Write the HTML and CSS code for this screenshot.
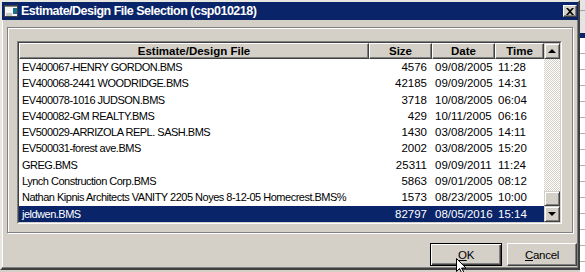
FILE: index.html
```html
<!DOCTYPE html>
<html lang="en">

<head>
    <meta charset="UTF-8">
    <title>Estimate/Design File Selection</title>
    <link rel="stylesheet" href="styles.css">
</head>

<body>
    <div class="dialog">
        <div class="titlebar">
            <svg class="app-icon" width="16" height="16" viewBox="0 0 16 16">
                <rect x="1.5" y="2.5" width="13" height="11" fill="#f4f4f4" stroke="#404040"/>
                <rect x="2" y="3" width="12" height="1" fill="#808080"/>
                <rect x="10" y="5" width="4" height="6" fill="#1c6e8c"/>
                <rect x="3" y="10" width="6" height="3" fill="#c8c8c8"/>
            </svg>
            <span class="title">Estimate/Design File Selection (csp010218)</span>
            <span class="close-btn">
                <svg width="8" height="7" viewBox="0 0 8 7">
                    <path d="M0 0h2l2 2 2-2h2L5 3.5 8 7H6L4 5 2 7H0l3-3.5z" fill="#000"/>
                </svg>
            </span>
        </div>

        <div class="frame">
            <div class="list">
                <div class="list-body">
                    <div class="table">
                        <div class="row header">
                            <div class="head-cell">Estimate/Design File</div>
                            <div class="head-cell">Size</div>
                            <div class="head-cell">Date</div>
                            <div class="head-cell">Time</div>
                        </div>
                        <div class="row">
                            <div class="cell name">EV400067-HENRY GORDON.BMS</div>
                            <div class="cell size">4576</div>
                            <div class="cell date">09/08/2005</div>
                            <div class="cell time">11:28</div>
                        </div>
                        <div class="row">
                            <div class="cell name">EV400068-2441 WOODRIDGE.BMS</div>
                            <div class="cell size">42185</div>
                            <div class="cell date">09/09/2005</div>
                            <div class="cell time">14:31</div>
                        </div>
                        <div class="row">
                            <div class="cell name">EV400078-1016 JUDSON.BMS</div>
                            <div class="cell size">3718</div>
                            <div class="cell date">10/08/2005</div>
                            <div class="cell time">06:04</div>
                        </div>
                        <div class="row">
                            <div class="cell name">EV400082-GM REALTY.BMS</div>
                            <div class="cell size">429</div>
                            <div class="cell date">10/11/2005</div>
                            <div class="cell time">06:16</div>
                        </div>
                        <div class="row">
                            <div class="cell name">EV500029-ARRIZOLA REPL. SASH.BMS</div>
                            <div class="cell size">1430</div>
                            <div class="cell date">03/08/2005</div>
                            <div class="cell time">14:11</div>
                        </div>
                        <div class="row">
                            <div class="cell name">EV500031-forest ave.BMS</div>
                            <div class="cell size">2002</div>
                            <div class="cell date">03/08/2005</div>
                            <div class="cell time">15:20</div>
                        </div>
                        <div class="row">
                            <div class="cell name">GREG.BMS</div>
                            <div class="cell size">25311</div>
                            <div class="cell date">09/09/2011</div>
                            <div class="cell time">11:24</div>
                        </div>
                        <div class="row">
                            <div class="cell name">Lynch Construction Corp.BMS</div>
                            <div class="cell size">5863</div>
                            <div class="cell date">09/01/2005</div>
                            <div class="cell time">08:12</div>
                        </div>
                        <div class="row">
                            <div class="cell name">Nathan Kipnis Architects VANITY 2205 Noyes 8-12-05 Homecrest.BMS%</div>
                            <div class="cell size">1573</div>
                            <div class="cell date">08/23/2005</div>
                            <div class="cell time">10:00</div>
                        </div>
                        <div class="row selected">
                            <div class="cell name">jeldwen.BMS</div>
                            <div class="cell size">82797</div>
                            <div class="cell date">08/05/2016</div>
                            <div class="cell time">15:14</div>
                        </div>
                    </div>

                    <div class="scrollbar">
                        <div class="scroll-btn"><span class="arrow up"></span></div>
                        <div class="track">
                            <div class="thumb"></div>
                        </div>
                        <div class="scroll-btn"><span class="arrow down"></span></div>
                    </div>
                </div>
            </div>
        </div>

        <div class="actions">
            <button class="btn default"><u>O</u>K</button>
            <button class="btn"><u>C</u>ancel</button>
        </div>
    </div>

    <div class="behind"></div>

    <!-- mouse pointer resting on the OK button -->
    <svg class="pointer" width="12" height="16" viewBox="0 0 12 16">
        <path d="M0.5 0.5v13l3-3 2.5 5 2-1-2.5-4.5h4.5z" fill="#fff" stroke="#000"/>
    </svg>
</body>

</html>
```

FILE: styles.css
```css
body {
    margin: 0;
    width: 585px;
    height: 272px;
    overflow: hidden;
    display: flex;
    align-items: flex-start;
    background: #d4d0c8;
    font-family: "Liberation Sans", Arial, sans-serif;
    position: relative;
}

.dialog {
    width: 580px;
    height: 270px;
    box-sizing: border-box;
    background: #d4d0c8;
    border: 2px solid;
    border-color: #e8e6e0 #404040 #404040 #e8e6e0;
    box-shadow: inset -1px -1px 0 #808080, inset 1px 1px 0 #fff;
    display: flex;
    flex-direction: column;
}

.titlebar {
    height: 18px;
    background: #0a246a;
    color: white;
    display: flex;
    align-items: center;
    gap: 2px;
    padding: 0 1px 0 1px;
}

.app-icon {
    flex: none;
}

.title {
    flex: 1;
    font-size: 12.5px;
    font-weight: bold;
    letter-spacing: -0.5px;
    white-space: nowrap;
}

.close-btn {
    width: 14px;
    height: 12px;
    box-sizing: border-box;
    background: #d4d0c8;
    border: 1px solid;
    border-color: #fff #404040 #404040 #fff;
    box-shadow: inset -1px -1px 0 #808080;
    display: flex;
    align-items: center;
    justify-content: center;
}

/* etched group frame */
.frame {
    margin: 7px 5px 0;
    height: 206px;
    box-sizing: border-box;
    border: 1px solid #808080;
    box-shadow: inset 1px 1px 0 #fff, 1px 1px 0 #fff;
    padding: 13px 10px 0 9px;
}

.list {
    height: 183px;
    box-sizing: border-box;
    border: 1px solid;
    border-color: #808080 #fff #fff #808080;
}

.list-body {
    height: 100%;
    box-sizing: border-box;
    border: 1px solid;
    border-color: #404040 #d4d0c8 #d4d0c8 #404040;
    background: white;
    display: flex;
}

.table {
    width: 525px;
}

.row {
    display: grid;
    grid-template-columns: 350px 63px 63px 49px;
    height: 16.3px;
    line-height: 16.3px;
    color: #000;
}

.row.header {
    height: 16px;
}

.head-cell {
    box-sizing: border-box;
    height: 16px;
    line-height: 14px;
    background: #d4d0c8;
    border: 1px solid;
    border-color: #fff #404040 #404040 #fff;
    box-shadow: inset -1px -1px 0 #808080;
    text-align: center;
    font-size: 11.5px;
    font-weight: bold;
}

.cell {
    white-space: nowrap;
    overflow: hidden;
}

.name {
    padding-left: 3px;
    font-size: 11px;
    letter-spacing: -0.5px;
}

.size,
.date,
.time {
    font-size: 11.5px;
}

.size {
    text-align: right;
    padding-right: 5px;
}

.date,
.time {
    padding-left: 3px;
}

.row.selected {
    background: #0a246a;
    color: white;
}

.scrollbar {
    width: 16px;
    display: flex;
    flex-direction: column;
}

.scroll-btn {
    width: 16px;
    height: 16px;
    box-sizing: border-box;
    background: #d4d0c8;
    border: 1px solid;
    border-color: #d4d0c8 #404040 #404040 #d4d0c8;
    box-shadow: inset 1px 1px 0 #fff, inset -1px -1px 0 #808080;
    display: flex;
    align-items: center;
    justify-content: center;
}

.arrow {
    width: 0;
    height: 0;
    border-left: 4px solid transparent;
    border-right: 4px solid transparent;
}

.arrow.up {
    border-bottom: 4px solid #000;
}

.arrow.down {
    border-top: 4px solid #000;
}

.track {
    flex: 1;
    display: flex;
    flex-direction: column;
    justify-content: flex-end;
    background-color: #fff;
    background-image: conic-gradient(#d4d0c8 25%, #fff 0 50%, #d4d0c8 0 75%, #fff 0);
    background-size: 2px 2px;
}

.thumb {
    height: 15px;
    box-sizing: border-box;
    background: #d4d0c8;
    border: 1px solid;
    border-color: #d4d0c8 #404040 #404040 #d4d0c8;
    box-shadow: inset 1px 1px 0 #fff, inset -1px -1px 0 #808080;
}

.actions {
    display: flex;
    justify-content: flex-end;
    gap: 5px;
    margin-top: 10px;
    padding-right: 1px;
}

.btn {
    height: 23px;
    width: 70px;
    box-sizing: border-box;
    padding: 0;
    background: #d4d0c8;
    border: 1px solid;
    border-color: #fff #404040 #404040 #fff;
    box-shadow: inset -1px -1px 0 #808080;
    font-family: "Liberation Sans", Arial, sans-serif;
    font-size: 11.5px;
    letter-spacing: -0.3px;
    color: #000;
}

.btn.default {
    width: 72px;
    border-color: #000;
    box-shadow: inset 1px 1px 0 #fff, inset -1px -1px 0 #404040, inset -2px -2px 0 #808080;
}

/* window lying behind the dialog */
.behind {
    flex: 1;
    height: 272px;
    background:
        linear-gradient(#0a246a, #0a246a) 0 33px / 100% 5px no-repeat,
        linear-gradient(#a0a0a0, #a0a0a0) 0 10px / 100% 1px no-repeat,
        repeating-linear-gradient(#fff 0 15px, #b0b0b0 15px 16px) 0 38px / 100% 100% no-repeat,
        #e4e4e4;
}

.pointer {
    position: absolute;
    left: 456px;
    top: 258px;
}
```
